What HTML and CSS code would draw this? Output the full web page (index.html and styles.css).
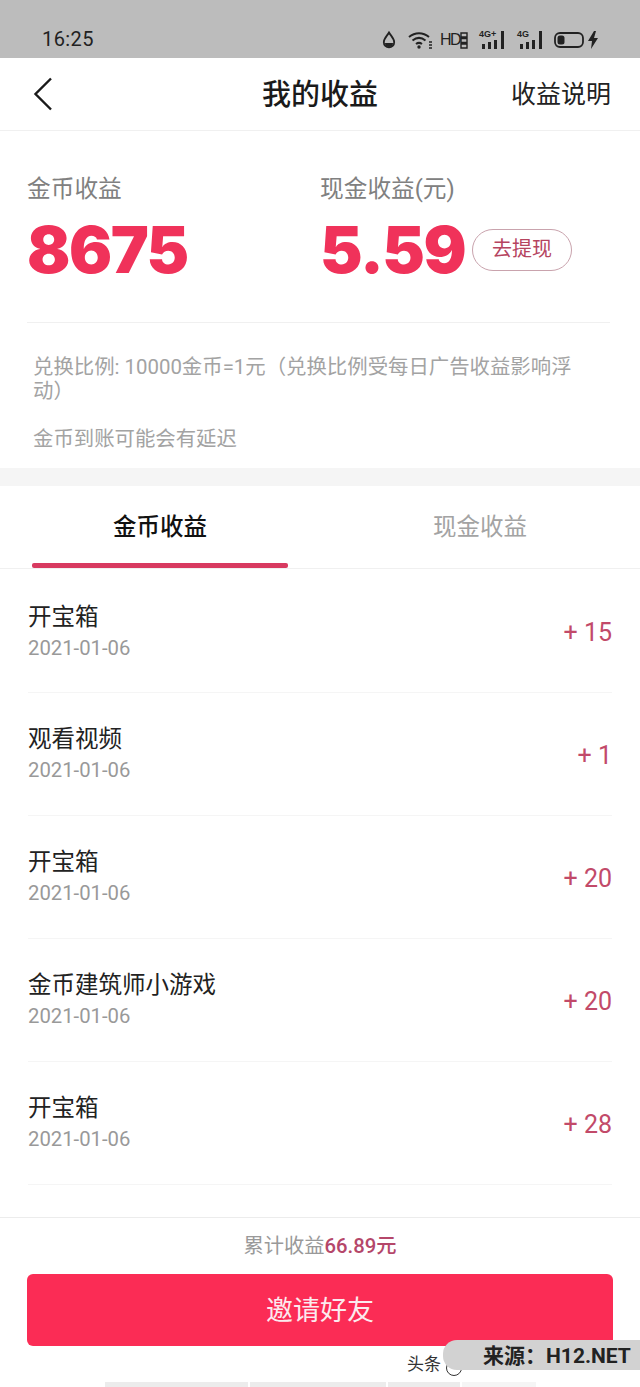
FILE: index.html
```html
<!DOCTYPE html>
<html lang="zh-CN">
  <head>
    <meta charset="UTF-8">
    <meta name="viewport" content="width=device-width, initial-scale=1.0">
    <title>我的收益</title>
    <link rel="stylesheet" href="styles.css">
  </head>

  <body>
    <div class="page">
      <!-- Status bar -->
      <div class="status-bar">
        <span class="clock">16:25</span>
        <div class="status-icons">
          <svg width="16" height="20" viewBox="0 0 16 20"><path d="M8 2.500C6 6 2.800 8.600 2.800 12.200a5.200 5.200 0 0 0 10.400 0C13.200 8.600 10 6 8 2.500z" fill="none" stroke="#222" stroke-width="1.800"/><path d="M4 13h8a4 4 0 0 1-8 0z" fill="#222"/></svg>
          <svg width="26" height="20" viewBox="0 0 26 20"><g fill="none" stroke="#222" stroke-width="2"><path d="M1 7c6-5 14-5 20 0"/><path d="M4.500 10.500c4-3.200 9-3.200 13 0"/><path d="M8 14c2-1.500 4-1.500 6 0"/></g><circle cx="11" cy="17" r="1.700" fill="#222"/><path d="M21 12h3M21 15h3M21 18h3" stroke="#222" stroke-width="1.500"/></svg>
          <div class="hd-group">
            <span class="hd">HD</span>
            <svg width="8" height="20" viewBox="0 0 8 20"><path d="M1 3h6v4H1zM1 8.500h6v4H1zM1 14h6v4H1z" fill="none" stroke="#222" stroke-width="1.400"/></svg>
          </div>
          <div class="signal">
            <span class="net">4G+</span>
            <svg width="26" height="20" viewBox="0 0 26 20"><path d="M3 14h3v5H3zM9 12h3v7H9zM15 10h3v9h-3zM22 1h3v18h-3z" fill="#222"/></svg>
          </div>
          <div class="signal">
            <span class="net">4G</span>
            <svg width="26" height="20" viewBox="0 0 26 20"><path d="M3 14h3v5H3zM9 12h3v7H9zM15 10h3v9h-3zM22 1h3v18h-3z" fill="#222"/></svg>
          </div>
          <svg width="46" height="20" viewBox="0 0 46 20"><rect x="1" y="3" width="28" height="14" rx="5" fill="none" stroke="#222" stroke-width="1.800"/><rect x="3.500" y="5.500" width="7" height="9" rx="2.500" fill="#222"/><path d="M40 1l-6 10h4l-1 8 7-11h-4l2-7z" fill="#222"/></svg>
        </div>
      </div>

      <!-- Title bar -->
      <div class="nav-bar">
        <svg class="back" width="20" height="34" viewBox="0 0 20 34"><path d="M18 1.500L2.500 17 18 32.500" fill="none" stroke="#1a1a1a" stroke-width="2.400"/></svg>
        <h1 class="nav-title">我的收益</h1>
        <span class="nav-link">收益说明</span>
      </div>

      <!-- Totals -->
      <div class="summary">
        <div class="totals">
          <div class="total total-coin">
            <div class="total-label">金币收益</div>
            <div class="total-value">8675</div>
          </div>
          <div class="total">
            <div class="total-label">现金收益(元)</div>
            <div class="total-row">
              <div class="total-value">5.59</div>
              <span class="withdraw">去提现</span>
            </div>
          </div>
        </div>
        <div class="notes">
          <p>兑换比例: 10000金币=1元（兑换比例受每日广告收益影响浮动）</p>
          <p>金币到账可能会有延迟</p>
        </div>
      </div>

      <!-- Tabs -->
      <div class="tabs">
        <div class="tab active">金币收益</div>
        <div class="tab">现金收益</div>
      </div>

      <!-- Earnings list -->
      <ul class="list">
        <li class="item">
          <div><div class="item-name">开宝箱</div><div class="item-date">2021-01-06</div></div>
          <span class="item-amount">+ 15</span>
        </li>
        <li class="item">
          <div><div class="item-name">观看视频</div><div class="item-date">2021-01-06</div></div>
          <span class="item-amount">+ 1</span>
        </li>
        <li class="item">
          <div><div class="item-name">开宝箱</div><div class="item-date">2021-01-06</div></div>
          <span class="item-amount">+ 20</span>
        </li>
        <li class="item">
          <div><div class="item-name">金币建筑师小游戏</div><div class="item-date">2021-01-06</div></div>
          <span class="item-amount">+ 20</span>
        </li>
        <li class="item">
          <div><div class="item-name">开宝箱</div><div class="item-date">2021-01-06</div></div>
          <span class="item-amount">+ 28</span>
        </li>
      </ul>

      <!-- Footer -->
      <div class="footer">
        <div class="sum">累计收益<span class="sum-value">66.89元</span></div>
        <button class="invite">邀请好友</button>
        <div class="strips"><i></i><i></i><i></i><i></i></div>
      </div>

      <div class="mark-under">头条</div>
      <div class="mark">来源：H12.NET</div>
    </div>
  </body>
</html>
```

FILE: styles.css
```css
* {
  box-sizing: border-box;
}

body {
  margin: 0;
  background-color: #fff;
  font-family: "Roboto", "Noto Sans CJK SC", sans-serif;
}

.page {
  position: relative;
  width: 640px;
  height: 1387px;
  overflow: hidden;
}

/* Status bar */
.status-bar {
  display: flex;
  align-items: center;
  justify-content: space-between;
  height: 58px;
  padding: 21px 40px 0 42px;
  background-color: #bcbcbc;
  color: #222;
}

.clock {
  margin-bottom: 2px;
  font-size: 20px;
  letter-spacing: 0.4px;
}

.status-icons {
  display: flex;
  align-items: center;
  gap: 11px;
}

.hd-group {
  display: flex;
  align-items: center;
  margin-left: -5px;
}

.hd {
  width: 20px;
  font-size: 16px;
  font-family: "Liberation Sans", sans-serif;
  letter-spacing: -1.5px;
}

.signal {
  position: relative;
  width: 26px;
  height: 20px;
}

.signal + .signal {
  margin-left: 1px;
}

.net {
  position: absolute;
  left: 0;
  top: -1px;
  font-size: 9px;
  font-weight: 700;
  line-height: 10px;
  font-family: "Liberation Sans", sans-serif;
}

.signal svg {
  display: block;
}

/* Title bar */
.nav-bar {
  position: relative;
  display: flex;
  align-items: center;
  justify-content: space-between;
  height: 73px;
  padding: 0 29px 4px 33px;
  border-bottom: 1px solid #f0f0f0;
}

.back {
  display: block;
  margin-top: 4px;
}

.nav-title {
  position: absolute;
  left: 0;
  right: 0;
  margin: 0;
  text-align: center;
  font-size: 29px;
  font-weight: 500;
  color: #1a1a1a;
}

.nav-link {
  font-size: 25px;
  color: #222;
}

/* Totals */
.summary {
  height: 355px;
  padding: 43px 30px 0 27px;
  border-bottom: 18px solid #f5f5f5;
}

.totals {
  display: flex;
  height: 149px;
  border-bottom: 1px solid #f0f0f0;
}

.total-coin {
  width: 293px;
}

.total-label {
  height: 30px;
  line-height: 30px;
  font-size: 23.7px;
  color: #808080;
}

.total-row {
  display: flex;
  align-items: flex-start;
}

.total-value {
  height: 64px;
  margin-top: 14px;
  line-height: 64px;
  font-family: "Inter", sans-serif;
  font-size: 64px;
  font-weight: 900;
  letter-spacing: -1.5px;
  color: #f0325a;
}

.withdraw {
  width: 100px;
  height: 42px;
  margin: 25px 0 0 7px;
  border: 1px solid #c9a3ad;
  border-radius: 21px;
  line-height: 38px;
  text-align: center;
  font-size: 20px;
  color: #b5445f;
}

.notes {
  padding: 32px 25px 0 6px;
  font-size: 20.4px;
  line-height: 24px;
  color: #a3a3a3;
}

.notes p {
  margin: 0 0 24px;
}

/* Tabs */
.tabs {
  display: flex;
  height: 83px;
  border-bottom: 1px solid #f0f0f0;
}

.tab {
  flex: 1;
  padding-top: 23px;
  text-align: center;
  font-size: 23.5px;
  line-height: 36px;
  color: #a3a3a3;
}

.tab.active {
  position: relative;
  font-weight: 500;
  color: #111;
}

.tab.active::after {
  content: "";
  position: absolute;
  left: 32px;
  right: 32px;
  bottom: 0;
  height: 5px;
  border-radius: 2px;
  background-color: #d83a60;
}

/* Earnings list */
.list {
  height: 649px;
  margin: 0;
  padding: 0;
  list-style: none;
  border-bottom: 1px solid #ececec;
}

.item {
  display: flex;
  align-items: center;
  justify-content: space-between;
  height: 123px;
  margin: 0 28px;
  padding-bottom: 1px;
  border-bottom: 1px solid #f5f5f5;
}

.item:first-child {
  height: 124px;
  padding-top: 1px;
  padding-bottom: 0;
}

.item-name {
  font-size: 23.5px;
  line-height: 32px;
  color: #222;
}

.item-date {
  margin-top: 1px;
  font-size: 20.3px;
  line-height: 28px;
  color: #999;
}

.item-amount {
  padding-top: 3px;
  font-size: 25px;
  color: #c24a69;
}

/* Footer */
.footer {
  height: 170px;
  padding: 13px 27px 0;
}

.sum {
  height: 30px;
  line-height: 30px;
  text-align: center;
  font-size: 20.3px;
  color: #999;
}

.sum-value {
  font-weight: 500;
  color: #b5476a;
}

.invite {
  display: block;
  width: 586px;
  height: 72px;
  margin-top: 13px;
  padding-bottom: 5px;
  border: none;
  border-radius: 6px;
  background-color: #fb2c55;
  color: #fbeaee;
  font-family: inherit;
  font-size: 27px;
}

.strips {
  display: flex;
  gap: 2px;
  margin: 36px 0 0 78px;
}

.strips i {
  width: 143px;
  height: 5px;
  background-color: #ececec;
}

.strips i:nth-child(2) {
  width: 136px;
}

.strips i:nth-child(3) {
  width: 72px;
}

.strips i:last-child {
  width: 74px;
  background-color: #f5f5f5;
}

/* Source tag over the corner */
.mark-under {
  position: absolute;
  left: 407px;
  top: 1352px;
  font-size: 17px;
  line-height: 24px;
  color: #333;
}

.mark-under::after {
  content: "";
  position: absolute;
  left: 39px;
  top: 8px;
  width: 14px;
  height: 14px;
  border: 1px solid #333;
  border-radius: 50%;
}

.mark {
  position: absolute;
  left: 443px;
  top: 1340px;
  width: 197px;
  height: 30px;
  padding-left: 40px;
  border-radius: 14px 0 0 14px;
  background-color: #d2d2d2;
  line-height: 32px;
  font-size: 21px;
  font-weight: 700;
  color: #222;
  white-space: nowrap;
}
```
